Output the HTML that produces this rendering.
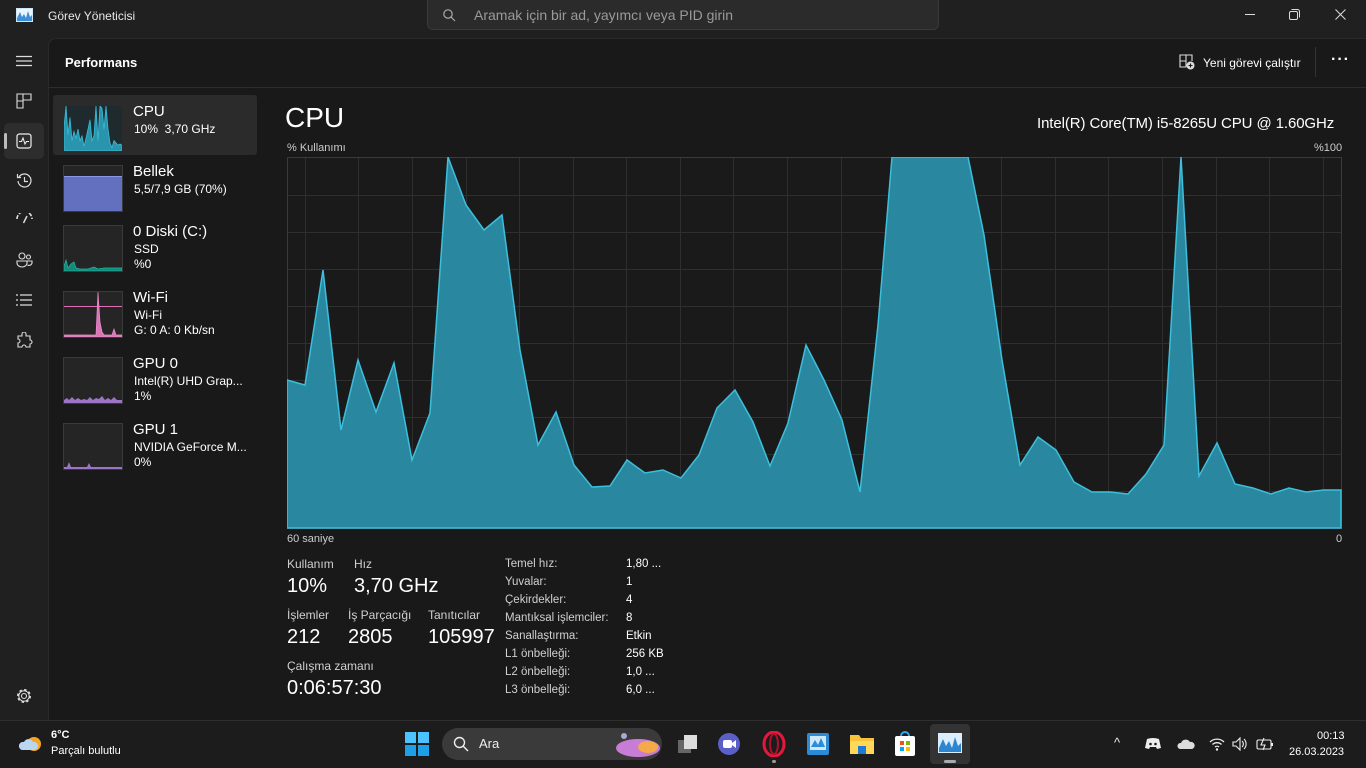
<!DOCTYPE html>
<html><head><meta charset="utf-8">
<style>
*{margin:0;padding:0;box-sizing:border-box}
body{width:1366px;height:768px;overflow:hidden;background:#202020;font-family:"Liberation Sans","DejaVu Sans",sans-serif;color:#fff;position:relative}
.abs{position:absolute}
.t{position:absolute;white-space:nowrap}
.main{position:absolute;left:48px;top:38px;width:1318px;height:682px;background:#191919;border-top-left-radius:8px;border-top:1px solid #2a2a2a;border-left:1px solid #2a2a2a}
.lbl{font-size:12px;color:#d0d0d0}
.big{font-size:20px;color:#fff}
.small{font-size:12px;color:#fff}
.thumb{position:absolute;left:63px;width:60px;height:47px;background:#252525;border:1px solid #3a3a3a}
.taskbar{position:absolute;left:0;top:720px;width:1366px;height:48px;background:#1c1c1c;border-top:1px solid #2e2e2e}
svg{position:absolute}
</style></head><body>
<svg style="left:16px;top:8px" width="17" height="14" viewBox="0 0 17 14"><rect x="0" y="0" width="17" height="14" fill="#cfe6f7"/><rect x="1" y="1" width="15" height="12" fill="#eaf4fc"/><path d="M1 10 L4 4 L6 9 L8 6 L10 10 L12 3 L14 9 L16 7 L16 13 L1 13Z" fill="#3b8fd9"/></svg>
<div class="t" style="left:48px;top:9px;font-size:12px;color:#e8e8e8">Görev Yöneticisi</div>
<div class="abs" style="left:427px;top:0;width:512px;height:30px;background:#2b2b2b;border:1px solid #3a3a3a;border-top:none;border-radius:0 0 6px 6px"></div>
<svg style="left:442px;top:8px" width="14" height="14" viewBox="0 0 14 14"><circle cx="6" cy="6" r="4.2" stroke="#aaa" stroke-width="1.2" fill="none"/><path d="M9 9 L13 13" stroke="#aaa" stroke-width="1.2"/></svg>
<div class="t" style="left:474px;top:7px;font-size:14px;color:#9a9a9a">Aramak için bir ad, yayımcı veya PID girin</div>
<div class="abs" style="left:1245px;top:14px;width:10px;height:1px;background:#ddd"></div>
<svg style="left:1289px;top:9px" width="11" height="11" viewBox="0 0 11 11"><rect x="0.5" y="2.5" width="8" height="8" rx="1.5" fill="none" stroke="#ddd"/><path d="M2.5 0.5 H8.5 A2 2 0 0 1 10.5 2.5 V8.5" fill="none" stroke="#ddd"/></svg>
<svg style="left:1335px;top:9px" width="11" height="11" viewBox="0 0 11 11"><path d="M0.5 0.5 L10.5 10.5 M10.5 0.5 L0.5 10.5" stroke="#ddd"/></svg>

<svg style="left:16px;top:55px" width="16" height="12"><path d="M0 1.5H16M0 6H16M0 10.5H16" stroke="#ddd" stroke-width="1.2"/></svg>
<svg style="left:16px;top:93px" width="16" height="16" viewBox="0 0 16 16"><path d="M1 1H7V15H1ZM7 1H15V7H7ZM1 8H7" fill="none" stroke="#ddd" stroke-width="1.1"/></svg>
<div class="abs" style="left:4px;top:123px;width:40px;height:36px;background:#2d2d2d;border-radius:5px"></div>
<div class="abs" style="left:4px;top:133px;width:3px;height:16px;background:#bbb;border-radius:2px"></div>
<svg style="left:16px;top:133px" width="16" height="16" viewBox="0 0 16 16"><rect x="1" y="1" width="14" height="14" rx="2.5" fill="none" stroke="#eee" stroke-width="1.2"/><path d="M3 8.5H5.5L7 5L9 11L10.5 8.5H13" fill="none" stroke="#eee" stroke-width="1.1"/></svg>
<svg style="left:16px;top:172px" width="17" height="17" viewBox="0 0 17 17"><path d="M3 5A6.5 6.5 0 1 1 2 9" fill="none" stroke="#ddd" stroke-width="1.2"/><path d="M1.5 2V5.5H5" fill="none" stroke="#ddd" stroke-width="1.2"/><path d="M8.5 5V9.5H12" fill="none" stroke="#ddd" stroke-width="1.2"/></svg>
<svg style="left:16px;top:213px" width="17" height="12" viewBox="0 0 17 12"><path d="M1 6A7.5 7.5 0 0 1 16 6" fill="none" stroke="#ddd" stroke-width="1.6" stroke-dasharray="4 1.5"/><path d="M11 3L7.5 10" stroke="#ddd" stroke-width="1.5"/></svg>
<svg style="left:16px;top:252px" width="17" height="16" viewBox="0 0 17 16"><circle cx="6" cy="4" r="3" fill="none" stroke="#ddd" stroke-width="1.1"/><circle cx="12.5" cy="5" r="2" fill="none" stroke="#ddd" stroke-width="1.1"/><path d="M1 9H11V11A5 4 0 0 1 1 11Z" fill="none" stroke="#ddd" stroke-width="1.1"/><path d="M11 9H16V11A3 3 0 0 1 11.5 13" fill="none" stroke="#ddd" stroke-width="1.1"/></svg>
<svg style="left:16px;top:294px" width="16" height="12" viewBox="0 0 16 12"><path d="M0 1H2M0 6H2M0 11H2M4 1H16M4 6H16M4 11H16" stroke="#ddd" stroke-width="1.2"/></svg>
<svg style="left:16px;top:332px" width="17" height="17" viewBox="0 0 17 17"><path d="M6 2A2 2 0 0 1 10 2V4H14V8A2 2 0 0 1 14 12V15H10A2 2 0 0 0 6 15H2V11A2 2 0 0 0 2 7V4H6Z" fill="none" stroke="#ddd" stroke-width="1.1"/></svg>
<svg style="left:16px;top:688px" width="16" height="16" viewBox="0 0 16 16"><circle cx="8" cy="8" r="2.5" fill="none" stroke="#ddd" stroke-width="1.1"/><circle cx="8" cy="8" r="6" fill="none" stroke="#ddd" stroke-width="2" stroke-dasharray="2.4 2.3"/><circle cx="8" cy="8" r="5.2" fill="none" stroke="#ddd" stroke-width="1"/></svg>

<div class="main"></div>
<div class="t" style="left:65px;top:55px;font-size:13px;font-weight:bold;color:#fff">Performans</div>
<div class="abs" style="left:48px;top:87px;width:1318px;height:1px;background:#2d2d2d"></div>
<svg style="left:1179px;top:54px" width="16" height="16" viewBox="0 0 16 16"><path d="M1 1H7V13H1ZM7 1H13V7M1 7H7" fill="none" stroke="#ddd" stroke-width="1.1"/><circle cx="11.5" cy="11.5" r="4" fill="#ddd"/><path d="M11.5 9.5V13.5M9.5 11.5H13.5" stroke="#191919" stroke-width="1.1"/></svg>
<div class="t" style="left:1203px;top:56px;font-size:12px;color:#fff">Yeni görevi çalıştır</div>
<div class="abs" style="left:1315px;top:47px;width:1px;height:30px;background:#333"></div>
<div class="t" style="left:1331px;top:51px;font-size:16px;color:#fff;letter-spacing:1px;font-weight:bold">···</div>

<div class="abs" style="left:53px;top:95px;width:204px;height:60px;background:#2b2b2b;border-radius:3px"></div>
<div class="thumb" style="top:105px;background:#1f2a2e;border-color:#2b2b2b">
<svg style="left:0;top:0" width="58" height="45" viewBox="0 0 58 39" preserveAspectRatio="none"><path d="M0 39 L0 18 L2 0 L4 25 L6 10 L8 30 L10 22 L12 28 L14 20 L16 30 L18 26 L20 35 L22 28 L24 20 L26 12 L28 30 L30 26 L32 0 L34 30 L36 0 L38 2 L40 20 L42 0 L44 20 L46 32 L48 36 L50 30 L52 32 L54 34 L56 33 L58 34 L58 39Z" fill="#2a94ad" stroke="#38bcd8" stroke-width="0.8"/></svg></div>
<div class="t" style="left:133px;top:103px;font-size:15px">CPU</div>
<div class="t small" style="left:134px;top:122px">10%&nbsp; 3,70 GHz</div>

<div class="thumb" style="top:165px"><div class="abs" style="left:0;bottom:0;width:58px;height:35px;background:#6370c0;border-top:1px solid #8a97e6"></div></div>
<div class="t" style="left:133px;top:163px;font-size:15px">Bellek</div>
<div class="t small" style="left:134px;top:182px">5,5/7,9 GB (70%)</div>

<div class="thumb" style="top:225px"><svg style="left:0;top:0" width="58" height="45"><path d="M0 45 L0 40 L2 34 L4 42 L7 38 L10 36 L12 42 L16 43 L24 43 L30 41 L34 43 L40 42 L58 42 L58 45Z" fill="#14897a" stroke="#1fb8a0" stroke-width="0.7"/></svg></div>
<div class="t" style="left:133px;top:223px;font-size:15px">0 Diski (C:)</div>
<div class="t small" style="left:134px;top:242px">SSD</div>
<div class="t small" style="left:134px;top:257px">%0</div>

<div class="thumb" style="top:291px"><div class="abs" style="left:0;top:14px;width:58px;height:1px;background:#e06fb6"></div><svg style="left:0;top:0" width="58" height="45"><path d="M0 45 L0 43 L32 43 L34 0 L36 30 L38 40 L40 43 L48 43 L50 37 L52 43 L58 43 L58 45Z" fill="#d678b8" stroke="#f08ccc" stroke-width="0.7"/></svg></div>
<div class="t" style="left:133px;top:289px;font-size:15px">Wi-Fi</div>
<div class="t small" style="left:134px;top:308px">Wi-Fi</div>
<div class="t small" style="left:134px;top:323px">G: 0 A: 0 Kb/sn</div>

<div class="thumb" style="top:357px"><svg style="left:0;top:0" width="58" height="45"><path d="M0 45 L0 42 L3 40 L5 42 L8 39 L11 42 L14 40 L17 42 L20 41 L23 42 L26 39 L29 42 L32 40 L35 41 L38 38 L41 42 L44 40 L47 42 L50 39 L53 42 L58 42 L58 45Z" fill="#9b74c8"/></svg></div>
<div class="t" style="left:133px;top:355px;font-size:15px">GPU 0</div>
<div class="t small" style="left:134px;top:374px">Intel(R) UHD Grap...</div>
<div class="t small" style="left:134px;top:389px">1%</div>

<div class="thumb" style="top:423px"><svg style="left:0;top:0" width="58" height="45"><path d="M0 45 L0 43 L3 43 L5 38 L7 43 L23 43 L25 39 L27 43 L58 43 L58 45Z" fill="#9b74c8"/></svg></div>
<div class="t" style="left:133px;top:421px;font-size:15px">GPU 1</div>
<div class="t small" style="left:134px;top:440px">NVIDIA GeForce M...</div>
<div class="t small" style="left:134px;top:455px">0%</div>

<div class="t" style="left:285px;top:102px;font-size:28px">CPU</div>
<div class="t" style="left:1037px;top:115px;font-size:15px;letter-spacing:-0.1px">Intel(R) Core(TM) i5-8265U CPU @ 1.60GHz</div>
<div class="t" style="left:287px;top:142px;font-size:11px;color:#ccc">% Kullanımı</div>
<div class="t" style="left:1314px;top:142px;font-size:11px;color:#ccc">%100</div>

<svg style="left:287px;top:157px" width="1055" height="372" viewBox="287 157 1055 372">
<rect x="287.5" y="157.5" width="1054" height="371" fill="#1a1a1a" stroke="#3a3a3a"/>
<g stroke="#2f2f2f" stroke-width="1">
<path d="M288 195.5H1341M288 232.5H1341M288 269.5H1341M288 306.5H1341M288 343.5H1341M288 380.5H1341M288 417.5H1341M288 454.5H1341M288 491.5H1341"/>
<path d="M305.5 158V528M358.5 158V528M412.5 158V528M466.5 158V528M519.5 158V528M573.5 158V528M626.5 158V528M680.5 158V528M733.5 158V528M787.5 158V528M841.5 158V528M894.5 158V528M948.5 158V528M1001.5 158V528M1055.5 158V528M1108.5 158V528M1162.5 158V528M1216.5 158V528M1269.5 158V528M1323.5 158V528"/>
</g>
<path d="M287 528 L287 380 L305 385 L323 270 L341 430 L358 360 L376 412 L394 363 L412 460 L430 413 L448 157 L466 205 L484 230 L502 215 L520 350 L538 445 L556 412 L574 465 L592 487 L610 486 L627 460 L645 473 L663 470 L681 478 L699 455 L717 408 L735 390 L753 422 L770 466 L788 423 L806 345 L824 380 L842 420 L860 492 L878 325 L892 157 L968 157 L984 235 L1002 360 L1020 465 L1038 437 L1056 450 L1074 482 L1092 492 L1110 492 L1128 494 L1146 474 L1164 445 L1181 157 L1199 476 L1217 443 L1235 484 L1253 488 L1271 494 L1289 488 L1306 492 L1324 490 L1341 490 L1341 528 Z" fill="#2a8ea6" fill-opacity="0.95" stroke="#3cbfdc" stroke-width="1.5"/>
</svg>
<div class="t" style="left:287px;top:533px;font-size:11px;color:#ccc">60 saniye</div>
<div class="t" style="left:1336px;top:533px;font-size:11px;color:#ccc">0</div>

<div class="t lbl" style="left:287px;top:557px">Kullanım</div>
<div class="t lbl" style="left:354px;top:557px">Hız</div>
<div class="t big" style="left:287px;top:575px">10%</div>
<div class="t big" style="left:354px;top:575px">3,70 GHz</div>
<div class="t lbl" style="left:287px;top:608px">İşlemler</div>
<div class="t lbl" style="left:348px;top:608px">İş Parçacığı</div>
<div class="t lbl" style="left:428px;top:608px">Tanıtıcılar</div>
<div class="t big" style="left:287px;top:626px">212</div>
<div class="t big" style="left:348px;top:626px">2805</div>
<div class="t big" style="left:428px;top:626px">105997</div>
<div class="t lbl" style="left:287px;top:659px">Çalışma zamanı</div>
<div class="t big" style="left:287px;top:677px">0:06:57:30</div>

<div class="t lbl" style="left:505px;top:555px;line-height:18px;font-size:11.5px">Temel hız:<br>Yuvalar:<br>Çekirdekler:<br>Mantıksal işlemciler:<br>Sanallaştırma:<br>L1 önbelleği:<br>L2 önbelleği:<br>L3 önbelleği:</div>
<div class="t" style="left:626px;top:555px;line-height:18px;font-size:11.5px;color:#fff">1,80 ...<br>1<br>4<br>8<br>Etkin<br>256 KB<br>1,0 ...<br>6,0 ...</div>

<div class="taskbar"></div>
<svg style="left:18px;top:730px" width="26" height="26" viewBox="0 0 26 26"><circle cx="16" cy="14" r="7" fill="#f5a623"/><path d="M4 20A4 4 0 0 1 6 12A5 5 0 0 1 15 12A4 4 0 0 1 17 20Z" fill="#b9d6f2"/></svg>
<div class="t" style="left:51px;top:729px;font-size:11px;font-weight:bold">6°C</div>
<div class="t" style="left:51px;top:745px;font-size:11px">Parçalı bulutlu</div>
<svg style="left:405px;top:732px" width="24" height="24"><rect x="0" y="0" width="11" height="11" fill="#4cc2ff"/><rect x="13" y="0" width="11" height="11" fill="#4cc2ff"/><rect x="0" y="13" width="11" height="11" fill="#1ea0e8"/><rect x="13" y="13" width="11" height="11" fill="#1ea0e8"/></svg>
<div class="abs" style="left:442px;top:728px;width:220px;height:32px;background:#3a3a3a;border-radius:16px"></div>
<svg style="left:453px;top:736px" width="16" height="16"><circle cx="6.5" cy="6.5" r="5" fill="none" stroke="#eee" stroke-width="1.4"/><path d="M10 10L15 15" stroke="#eee" stroke-width="1.4"/></svg>
<div class="t" style="left:479px;top:736px;font-size:13px;color:#eee">Ara</div>
<svg style="left:604px;top:730px" width="58" height="30"><ellipse cx="34" cy="18" rx="22" ry="9" fill="#c77dd6"/><ellipse cx="44" cy="17" rx="10" ry="6" fill="#f5a94a"/><circle cx="20" cy="6" r="3" fill="#aac"/></svg>
<svg style="left:675px;top:732px" width="24" height="24"><rect x="3" y="8" width="13" height="13" fill="#666"/><rect x="9" y="3" width="13" height="14" fill="#ddd"/></svg>
<svg style="left:717px;top:732px" width="24" height="24"><circle cx="12" cy="12" r="11" fill="#5b5fc7"/><rect x="6" y="8" width="9" height="8" rx="2" fill="#fff"/><path d="M15 11L19 8V16L15 13Z" fill="#fff"/></svg>
<svg style="left:762px;top:731px" width="24" height="26"><ellipse cx="12" cy="13" rx="10" ry="12" fill="none" stroke="#e3193c" stroke-width="3"/><ellipse cx="12" cy="13" rx="4" ry="10" fill="none" stroke="#b0102c" stroke-width="2"/></svg>
<div class="abs" style="left:772px;top:760px;width:4px;height:3px;background:#999;border-radius:2px"></div>
<svg style="left:806px;top:732px" width="24" height="24"><rect x="1" y="1" width="22" height="22" rx="2" fill="#2b8bd6"/><rect x="4" y="4" width="16" height="14" fill="#cde8fb"/><path d="M5 15L9 8L12 13L15 6L19 15Z" fill="#2b8bd6"/></svg>
<svg style="left:849px;top:732px" width="26" height="24"><path d="M1 3H10L12 6H25V22H1Z" fill="#f8c33a"/><rect x="1" y="9" width="24" height="13" fill="#ffd85a"/><rect x="9" y="14" width="8" height="8" fill="#1e79d6"/></svg>
<svg style="left:893px;top:730px" width="24" height="28"><path d="M8 6A4 4 0 0 1 16 6" fill="none" stroke="#29a8f0" stroke-width="2"/><rect x="2" y="6" width="20" height="20" rx="2" fill="#fff"/><rect x="7" y="11" width="4" height="4" fill="#f25022"/><rect x="13" y="11" width="4" height="4" fill="#7fba00"/><rect x="7" y="17" width="4" height="4" fill="#00a4ef"/><rect x="13" y="17" width="4" height="4" fill="#ffb900"/></svg>
<div class="abs" style="left:930px;top:724px;width:40px;height:40px;background:#333;border-radius:4px"></div>
<svg style="left:938px;top:733px" width="24" height="20"><rect x="0" y="0" width="24" height="20" fill="#dceefb"/><path d="M1 15L5 6L8 13L11 8L14 15L17 4L20 13L23 10V19H1Z" fill="#2f86d0"/></svg>
<div class="abs" style="left:944px;top:760px;width:12px;height:3px;background:#aaa;border-radius:2px"></div>

<div class="t" style="left:1114px;top:735px;font-size:13px;color:#eee">^</div>
<svg style="left:1145px;top:737px" width="16" height="13"><path d="M2 2Q8 0 14 2L16 11L12 12L11 10H5L4 12L0 11Z" fill="#eee"/><circle cx="5.5" cy="7" r="1.3" fill="#1c1c1c"/><circle cx="10.5" cy="7" r="1.3" fill="#1c1c1c"/></svg>
<svg style="left:1177px;top:738px" width="18" height="12"><path d="M3 11A3 3 0 0 1 4 5A5 5 0 0 1 13 4A3.5 3.5 0 0 1 15 11Z" fill="#ddd"/></svg>
<svg style="left:1209px;top:737px" width="16" height="14"><path d="M1 5A10 10 0 0 1 15 5M3.5 7.5A6.5 6.5 0 0 1 12.5 7.5M6 10A3 3 0 0 1 10 10" fill="none" stroke="#eee" stroke-width="1.3"/><circle cx="8" cy="12.5" r="1.2" fill="#eee"/></svg>
<svg style="left:1232px;top:737px" width="16" height="14"><path d="M1 5H4L8 1V13L4 9H1Z" fill="none" stroke="#eee" stroke-width="1.1"/><path d="M10 4A4 4 0 0 1 10 10M12 2A7 7 0 0 1 12 12" fill="none" stroke="#eee" stroke-width="1.1"/></svg>
<svg style="left:1256px;top:737px" width="18" height="14"><rect x="1" y="3" width="14" height="9" rx="1.5" fill="none" stroke="#eee" stroke-width="1.1"/><rect x="15" y="6" width="2" height="3" fill="#eee"/><path d="M8 1L5 8H9L7 13" fill="none" stroke="#eee" stroke-width="1.1"/></svg>
<div class="t" style="left:1317px;top:730px;font-size:11px;color:#fff">00:13</div>
<div class="t" style="left:1289px;top:746px;font-size:11px;color:#fff">26.03.2023</div>
</body></html>
